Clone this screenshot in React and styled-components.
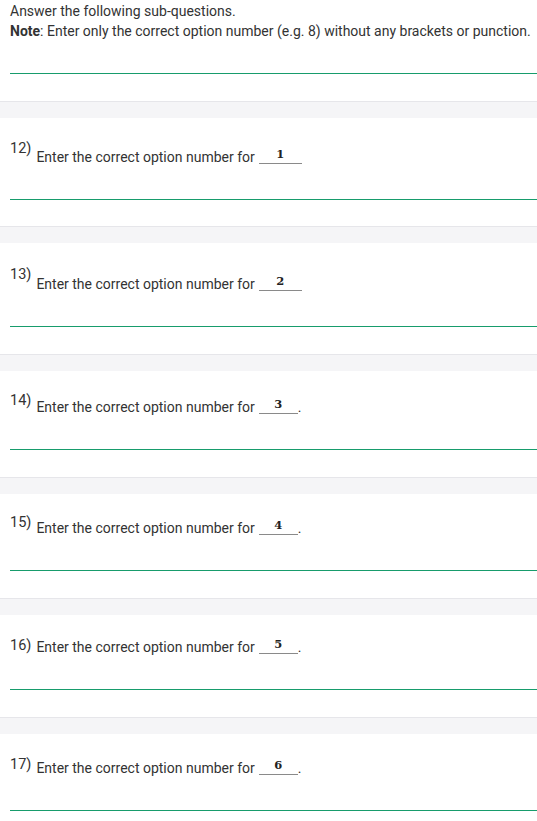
import styled, { createGlobalStyle } from "styled-components";

const GlobalStyle = createGlobalStyle`
    body {
        margin: 0;
        background: #ffffff;
        font-family: Roboto, "Liberation Sans", Arial, sans-serif;
        color: #333333;
    }
`;

const Page = styled.main`
    width: 100%;
    overflow: hidden;
`;

const Block = styled.section`
    padding: ${(p) => p.$top}px 0 0 10px;
    font-size: 14px;
    line-height: 20px;
`;

const Intro = styled.p`
    margin: 0;
`;

const AnswerLine = styled.div`
    height: 1px;
    margin-top: 32px;
    margin-bottom: ${(p) => p.$after}px;
    background: #179c6c;
`;

const Divider = styled.div`
    height: 16px;
    background: #f5f5f7;
    border-top: 1px solid #e6e6ea;
`;

const Row = styled.div`
    display: flex;
    align-items: flex-start;
    gap: 5px;
`;

const Label = styled.span`
    flex: none;
    height: 20px;
    font-size: 14.5px;
`;

const Prompt = styled.span`
    display: block;
    height: 20px;
    margin-top: ${(p) => p.$drop}px;
    white-space: nowrap;
`;

const Blank = styled.span`
    display: inline-block;
    width: ${(p) => p.$width}px;
    margin-left: 4px;
    border-bottom: 1px solid #8a8a8a;
    text-align: center;
    vertical-align: 4px;
    font-family: "DejaVu Serif", "Liberation Serif", serif;
    font-weight: bold;
    font-size: 11.5px;
    line-height: 12px;
    padding-bottom: 3px;
    color: #222;
`;

const questions = [
    { n: 12, val: 1, top: 21, drop: 8, after: 26, dot: false },
    { n: 13, val: 2, top: 22, drop: 9, after: 27, dot: false },
    { n: 14, val: 3, top: 20, drop: 6, after: 27, dot: true },
    { n: 15, val: 4, top: 19, drop: 5, after: 27, dot: true },
    { n: 16, val: 5, top: 21, drop: 1, after: 27, dot: true },
    { n: 17, val: 6, top: 21, drop: 3, after: 27, dot: true },
];

const App = () => {
    return (
        <>
            <GlobalStyle />
            <Page>
                <Block $top={1}>
                    <Intro>Answer the following sub-questions.</Intro>
                    <Intro>
                        <b>Note</b>: Enter only the correct option number (e.g. 8) without any brackets or punction.
                    </Intro>
                    <AnswerLine $after={27} />
                </Block>
                {questions.map((q) => (
                    <div key={q.n}>
                        <Divider />
                        <Block $top={q.top}>
                            <Row>
                                <Label>{q.n})</Label>
                                <Prompt $drop={q.drop}>
                                    Enter the correct option number for
                                    <Blank $width={q.dot ? 39 : 43}>{q.val}</Blank>
                                    {q.dot ? "." : ""}
                                </Prompt>
                            </Row>
                            <AnswerLine $after={q.after} />
                        </Block>
                    </div>
                ))}
            </Page>
        </>
    );
};

export default App;
